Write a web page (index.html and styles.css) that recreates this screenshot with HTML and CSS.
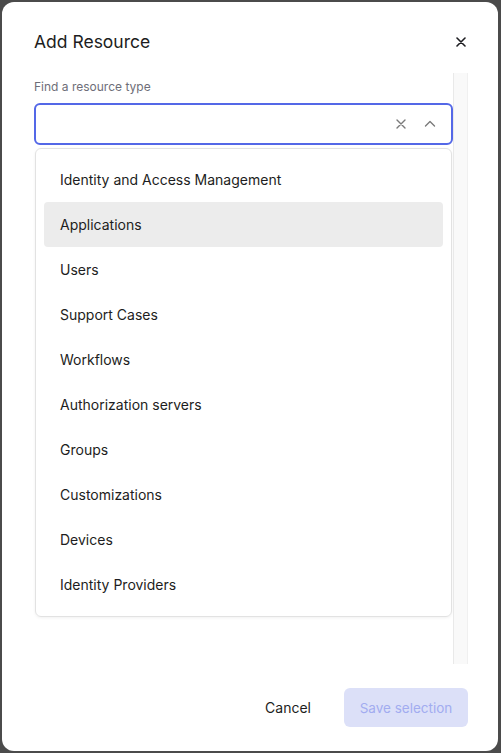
FILE: index.html
```html
<!DOCTYPE html>
<html lang="en">
<head>
<meta charset="utf-8">
<title>Add Resource</title>
<link rel="stylesheet" href="styles.css">
</head>
<body>
<div class="modal">
  <div class="header">
    <h1 class="title">Add Resource</h1>
    <button class="close" aria-label="Close">
      <svg width="10" height="10" viewBox="0 0 10 10"><path d="M1 1L9 9M9 1L1 9" stroke="#1d1d21" stroke-width="1.6" stroke-linecap="round"/></svg>
    </button>
  </div>
  <div class="body">
    <div class="content">
      <label class="label">Find a resource type</label>
      <div class="input">
        <span class="spacer"></span>
        <svg class="ico" width="12" height="12" viewBox="0 0 12 12"><path d="M2 2L10 10M10 2L2 10" stroke="#7a7a7a" stroke-width="1.4" stroke-linecap="round"/></svg>
        <svg class="ico" width="12" height="12" viewBox="0 0 12 12"><path d="M1.5 8L6 3.5L10.5 8" fill="none" stroke="#7a7a7a" stroke-width="1.4" stroke-linecap="round" stroke-linejoin="round"/></svg>
      </div>
      <ul class="list">
        <li class="item">Identity and Access Management</li>
        <li class="item active">Applications</li>
        <li class="item">Users</li>
        <li class="item">Support Cases</li>
        <li class="item">Workflows</li>
        <li class="item">Authorization servers</li>
        <li class="item">Groups</li>
        <li class="item">Customizations</li>
        <li class="item">Devices</li>
        <li class="item">Identity Providers</li>
      </ul>
    </div>
    <div class="scrolltrack"></div>
  </div>
  <div class="footer">
    <button class="btn cancel">Cancel</button>
    <button class="btn save">Save selection</button>
  </div>
</div>
</body>
</html>
```
FILE: styles.css
```css
* { box-sizing: border-box; }
html, body { margin: 0; padding: 0; }
body {
  background: #4b4b4b;
  font-family: Inter, "Noto Sans", sans-serif;
  color: #1d1d21;
  width: 501px;
  height: 753px;
  overflow: hidden;
  padding: 2px 3px 2px 2px;
}
.modal {
  width: 496px;
  height: 749px;
  background: #fff;
  border-radius: 12px;
  display: flex;
  flex-direction: column;
}
.header {
  display: flex;
  align-items: center;
  justify-content: space-between;
  padding: 29px 30px 0 32px;
  height: 51px;
}
.title {
  margin: 0;
  font-size: 17.5px;
  font-weight: 400;
  line-height: 22px;
  color: #1d1d21;
}
.close {
  border: 0;
  background: none;
  padding: 0;
  width: 10px;
  height: 10px;
  margin-right: 2px;
  display: flex;
}
.body {
  margin-top: 20px;
  height: 591px;
  display: flex;
  padding-left: 32px;
  padding-right: 30px;
}
.content {
  flex: 1;
  padding-top: 7px;
  display: flex;
  flex-direction: column;
}
.scrolltrack {
  width: 15px;
  background: #f9f9f9;
  border-left: 1px solid #e9e9e9;
  border-right: 1px solid #f0f0f0;
}
.label {
  font-size: 12px;
  line-height: 14px;
  color: #6e6e78;
  margin-bottom: 9px;
}
.input {
  height: 42px;
  border: 2px solid #5468e7;
  border-radius: 6px;
  display: flex;
  align-items: center;
  gap: 17px;
  padding-right: 15px;
}
.spacer { flex: 1; }
.ico { display: block; }
.list {
  list-style: none;
  margin: 3px 1px 0 1px;
  padding: 8px 8px;
  border: 1px solid #e2e2e2;
  border-radius: 6px;
  box-shadow: 0 1px 3px rgba(0,0,0,0.06);
  height: 469px;
}
.item {
  height: 45px;
  display: flex;
  align-items: center;
  padding-left: 16px;
  font-size: 14px;
  color: #1d1d21;
  border-radius: 4px;
}
.item.active { background: #ececec; }
.footer {
  display: flex;
  justify-content: flex-end;
  align-items: center;
  gap: 17px;
  padding: 24px 30px 0 0;
}
.btn {
  font-family: inherit;
  font-size: 14px;
  height: 39px;
  border: 0;
  border-radius: 6px;
  background: none;
}
.cancel {
  padding: 0 16px;
  color: #1d1d21;
}
.save {
  width: 124px;
  font-size: 13.5px;
  background: #dce0f8;
  color: #a2acf0;
}
```
